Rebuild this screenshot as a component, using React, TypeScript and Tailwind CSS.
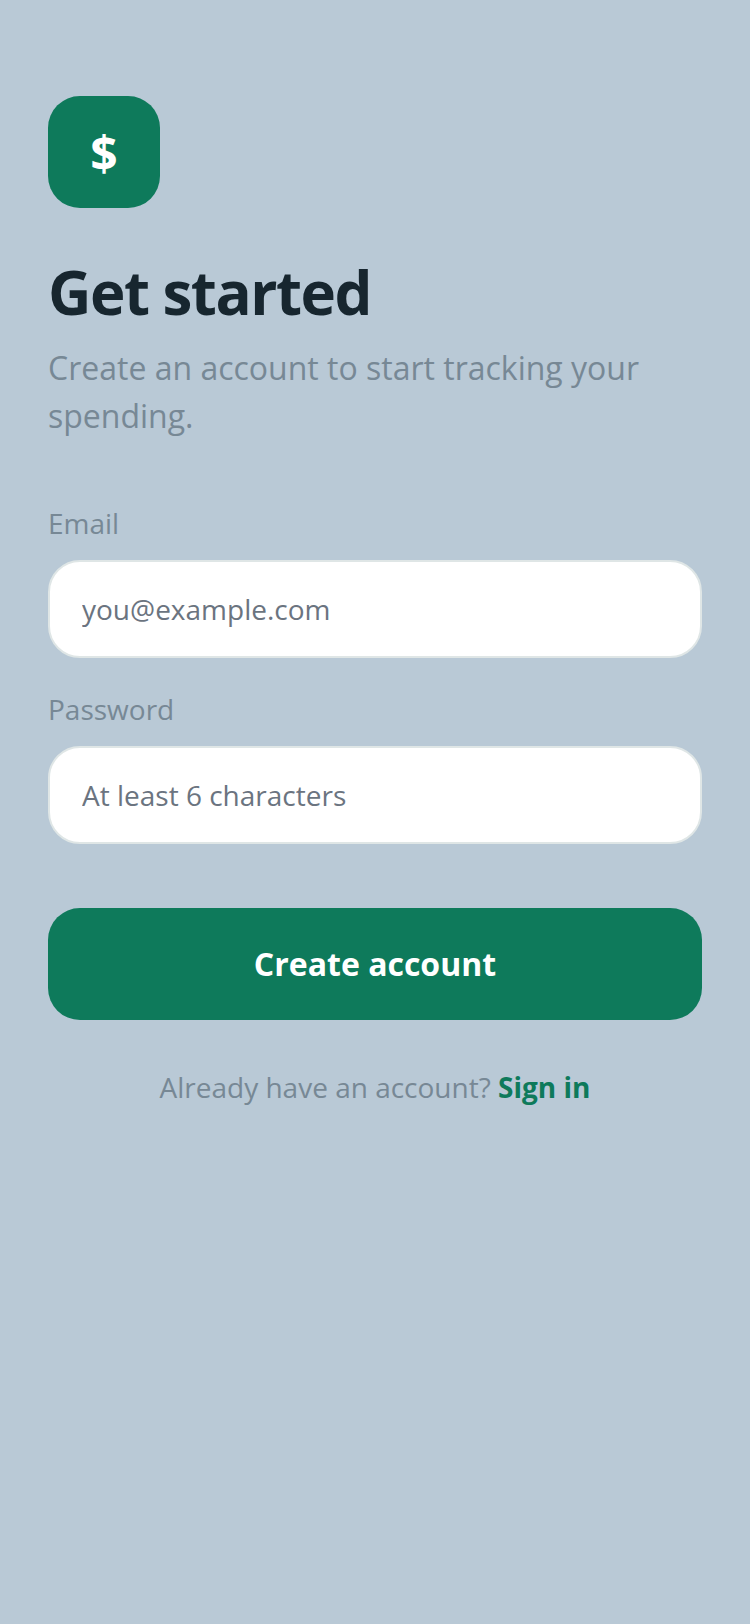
export default function App() {
  return (
    <main className="flex min-h-[1624px] w-full flex-col bg-[#b9c9d6] px-12 pt-24 font-['Open_Sans',sans-serif]">
      <div className="flex h-28 w-28 items-center justify-center rounded-[32px] bg-[#0e7a5b] pt-0.5">
        <span className="text-[48px] leading-none font-bold text-white">$</span>
      </div>
      <h1 className="mt-[46px] text-[60px] leading-[76px] font-bold tracking-[-1.5px] text-[#17262f]">Get started</h1>
      <p className="mt-[14px] text-[32px] leading-[48px] text-[#778895]">
        Create an account to start tracking your spending.
      </p>
      <label className="mt-[63px] text-[28px] leading-[40px] text-[#778895]">Email</label>
      <input
        placeholder="you@example.com"
        className="mt-[17px] h-[98px] w-full rounded-[32px] border-2 border-[#dfe6e6] bg-white px-8 text-[28px] text-[#17262f] outline-none placeholder:text-[#6b7480]"
      />
      <label className="mt-[31px] text-[28px] leading-[40px] text-[#778895]">Password</label>
      <input
        type="password"
        placeholder="At least 6 characters"
        className="mt-[17px] h-[98px] w-full rounded-[32px] border-2 border-[#dfe6e6] bg-white px-8 text-[28px] text-[#17262f] outline-none placeholder:text-[#6b7480]"
      />
      <button className="mt-16 h-28 w-full rounded-[32px] bg-[#0e7a5b] text-[32px] font-bold text-white">
        Create account
      </button>
      <p className="mt-[47px] text-center text-[28px] leading-[40px] text-[#778895]">
        Already have an account? <a className="font-bold text-[#0e7a5b]">Sign in</a>
      </p>
    </main>
  );
}
